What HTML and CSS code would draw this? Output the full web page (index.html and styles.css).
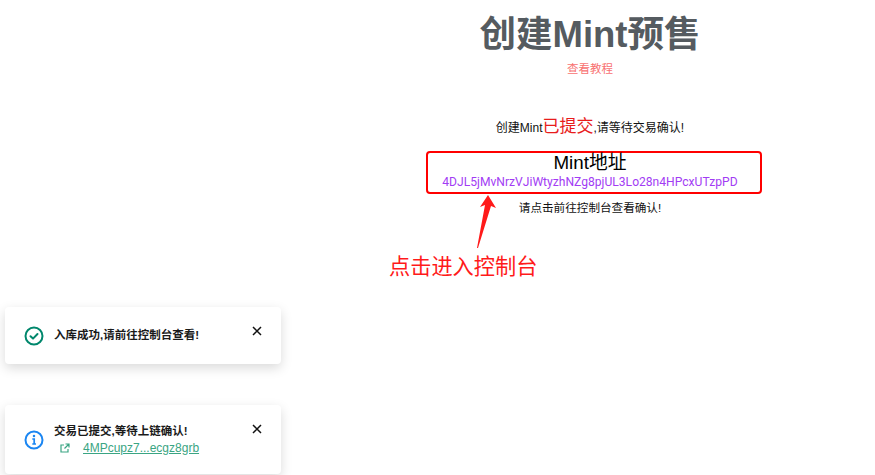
FILE: index.html
```html
<!DOCTYPE html>
<html lang="zh-CN">
<head>
    <meta charset="UTF-8">
    <title>创建Mint预售</title>
    <link rel="stylesheet" href="styles.css">
</head>
<body>
    <div class="container">
        <h1 class="page-title">创建Mint预售</h1>
        <a class="tutorial-link">查看教程</a>
        <p class="status-line">创建Mint<span class="status-word">已提交</span>,请等待交易确认!</p>
        <div class="mint-box">
            <div class="mint-label">Mint地址</div>
            <a class="mint-address">4DJL5jMvNrzVJiWtyzhNZg8pjUL3Lo28n4HPcxUTzpPD</a>
        </div>
        <p class="console-hint">请点击前往控制台查看确认!</p>
    </div>

    <svg class="arrow" width="24" height="56" viewBox="0 0 24 56">
        <path d="M13 0 L21 13 L16 11 L3 53 L2 53 L10 10 L5 12 Z" fill="#ff1a1a"/>
    </svg>
    <div class="annotation">点击进入控制台</div>

    <div class="toast toast-success">
        <svg class="toast-icon" width="20" height="20" viewBox="0 0 20 20" fill="none" stroke="#00876c" stroke-width="2">
            <circle cx="10" cy="10" r="8.5"/>
            <path d="M6.5 10.3 L9 12.6 L13.5 8" stroke-linecap="round" stroke-linejoin="round"/>
        </svg>
        <div class="toast-text">入库成功,请前往控制台查看!</div>
        <svg class="toast-close" width="10" height="10" viewBox="0 0 10 10" stroke="#111" stroke-width="1.5">
            <path d="M1 1 L9 9 M9 1 L1 9"/>
        </svg>
    </div>

    <div class="toast toast-info">
        <svg class="toast-icon" width="20" height="20" viewBox="0 0 20 20" fill="none" stroke="#1b86f2" stroke-width="2">
            <circle cx="10" cy="10" r="8.5"/>
            <path d="M8.3 9 H10.2 V14 M8.3 14 H12" stroke-width="1.7"/>
            <circle cx="10" cy="6" r="0.6" stroke-width="1.3"/>
        </svg>
        <div class="toast-text">
            交易已提交,等待上链确认!
            <div class="toast-link-row">
                <svg class="external-icon" width="10" height="10" viewBox="0 0 10 10" fill="none" stroke="#3aa583" stroke-width="1.2">
                    <path d="M8 6 V9 H1 V2 H4 M5.5 1 H9 V4.5 M9 1 L4.5 5.5"/>
                </svg>
                <a class="toast-link">4MPcupz7...ecgz8grb</a>
            </div>
        </div>
        <svg class="toast-close" width="10" height="10" viewBox="0 0 10 10" stroke="#111" stroke-width="1.5">
            <path d="M1 1 L9 9 M9 1 L1 9"/>
        </svg>
    </div>
</body>
</html>
```

FILE: styles.css
```css
html, body {
    height: 100%;
}
body {
    margin: 0;
    font-family: "Liberation Sans", "Noto Sans CJK SC", sans-serif;
    background-color: #ffffff;
    overflow: hidden;
}
.container {
    margin-left: 305px;
    width: 570px;
    display: flex;
    flex-direction: column;
    align-items: center;
    padding-top: 13px;
}
.page-title {
    margin: 0;
    font-size: 36.5px;
    line-height: 44px;
    font-weight: bold;
    color: #555b60;
}
.tutorial-link {
    margin-top: 3px;
    font-size: 11.5px;
    line-height: 18px;
    color: #f87171;
}
.status-line {
    margin: 36px 0 0;
    font-size: 12px;
    line-height: 26px;
    color: #111111;
}
.status-word {
    font-size: 17px;
    color: #e81c1c;
}
.mint-box {
    margin: 10px 0 0 8px;
    width: 336px;
    height: 43px;
    box-sizing: border-box;
    border: 2px solid #ff0000;
    border-radius: 4px;
    padding-right: 8px;
    display: flex;
    flex-direction: column;
    align-items: center;
}
.mint-label {
    font-size: 18.8px;
    line-height: 20px;
    color: #000000;
}
.mint-address {
    font-family: "Roboto", "Noto Sans CJK SC", sans-serif;
    font-size: 12.1px;
    line-height: 18px;
    color: #a23cf4;
}
.console-hint {
    margin: 5px 0 0;
    font-size: 11.6px;
    line-height: 18px;
    color: #111111;
}
.arrow {
    position: absolute;
    left: 475px;
    top: 195px;
}
.annotation {
    position: absolute;
    left: 389px;
    top: 253px;
    font-size: 21.2px;
    line-height: 28px;
    color: #ff1a1a;
}
.toast {
    position: absolute;
    left: 5px;
    width: 276px;
    box-sizing: border-box;
    background-color: #ffffff;
    border-radius: 4px;
    box-shadow: 0 4px 12px rgba(0, 0, 0, 0.15);
    display: flex;
    align-items: center;
    padding: 0 19px;
    gap: 10px;
}
.toast-success {
    top: 307px;
    height: 57px;
}
.toast-info {
    top: 405px;
    height: 69px;
}
.toast-icon {
    flex-shrink: 0;
}
.toast-text {
    flex-grow: 1;
    font-size: 11.5px;
    line-height: 17px;
    font-weight: bold;
    color: #1a1a1a;
}
.toast-link-row {
    display: flex;
    align-items: center;
    gap: 13px;
    padding-left: 6px;
}
.toast-link {
    font-weight: normal;
    font-size: 12px;
    color: #3aa583;
    text-decoration: underline;
}
.toast-close {
    align-self: flex-start;
    margin-top: 19px;
    margin-right: 0;
}
```
